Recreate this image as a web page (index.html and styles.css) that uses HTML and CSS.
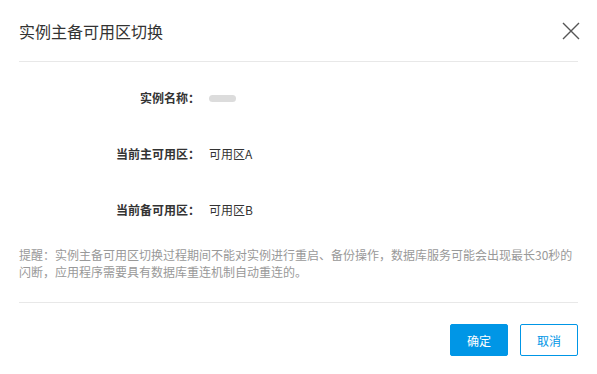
FILE: index.html
```html
<!DOCTYPE html>
<html lang="zh-CN">
<head>
  <meta charset="UTF-8">
  <meta name="viewport" content="width=device-width, initial-scale=1.0">
  <title>实例主备可用区切换</title>
  <link rel="stylesheet" href="styles.css">
</head>
<body>
  <div class="dialog">
    <header class="dialog-head">
      <h2 class="dialog-title">实例主备可用区切换</h2>
      <button class="close" type="button" aria-label="关闭">
        <svg width="18" height="18" viewBox="0 0 18 18">
          <path d="M1 1 L17 17 M17 1 L1 17" stroke="#555" stroke-width="1.4" fill="none"/>
        </svg>
      </button>
    </header>

    <section class="dialog-body">
      <div class="row">
        <span class="label">实例名称：</span>
        <span class="value"><i class="blur"></i></span>
      </div>
      <div class="row">
        <span class="label">当前主可用区：</span>
        <span class="value">可用区A</span>
      </div>
      <div class="row">
        <span class="label">当前备可用区：</span>
        <span class="value">可用区B</span>
      </div>
      <p class="tip">提醒：实例主备可用区切换过程期间不能对实例进行重启、备份操作，数据库服务可能会出现最长30秒的闪断，应用程序需要具有数据库重连机制自动重连的。</p>
    </section>

    <footer class="dialog-foot">
      <button class="btn btn-primary" type="button">确定</button>
      <button class="btn btn-default" type="button">取消</button>
    </footer>
  </div>
</body>
</html>
```

FILE: styles.css
```css
html, body {
  margin: 0;
  padding: 0;
  background: #fff;
}

body {
  font-family: "Noto Sans CJK SC", "Liberation Sans", sans-serif;
  font-size: 12px;
  color: #333;
}

.dialog {
  width: 597px;
  height: 374px;
  box-sizing: border-box;
  padding: 0 19px;
  display: flex;
  flex-direction: column;
}

.dialog-head {
  height: 61px;
  display: flex;
  align-items: center;
  justify-content: space-between;
  border-bottom: 1px solid #e8e8e8;
}

.dialog-title {
  margin: 0;
  font-size: 16px;
  font-weight: normal;
  color: #333;
  line-height: 20px;
}

.close {
  border: 0;
  background: none;
  padding: 0;
  margin-right: -2px;
  display: flex;
  cursor: pointer;
}

.dialog-body {
  padding-top: 27px;
  border-bottom: 1px solid #e8e8e8;
  padding-bottom: 22px;
}

.row {
  display: flex;
  line-height: 18px;
  margin-bottom: 38px;
}

.row:last-of-type {
  margin-bottom: 27px;
}

.label {
  width: 181px;
  text-align: right;
  font-weight: bold;
  color: #333;
}

.value {
  margin-left: 9px;
  color: #333;
  display: flex;
  align-items: center;
}

.blur {
  display: inline-block;
  width: 27px;
  height: 7px;
  border-radius: 4px;
  background: #dcdcdc;
}

.tip {
  margin: 0;
  color: #999;
  line-height: 17px;
}

.dialog-foot {
  display: flex;
  justify-content: flex-end;
  gap: 12px;
  padding-top: 21px;
}

.btn {
  width: 58px;
  height: 32px;
  box-sizing: border-box;
  border-radius: 2px;
  font-family: inherit;
  font-size: 12px;
  cursor: pointer;
}

.btn-primary {
  background: #0096e6;
  border: 1px solid #0096e6;
  color: #fff;
}

.btn-default {
  background: #fff;
  border: 1px solid #0096e6;
  color: #0096e6;
}
```
